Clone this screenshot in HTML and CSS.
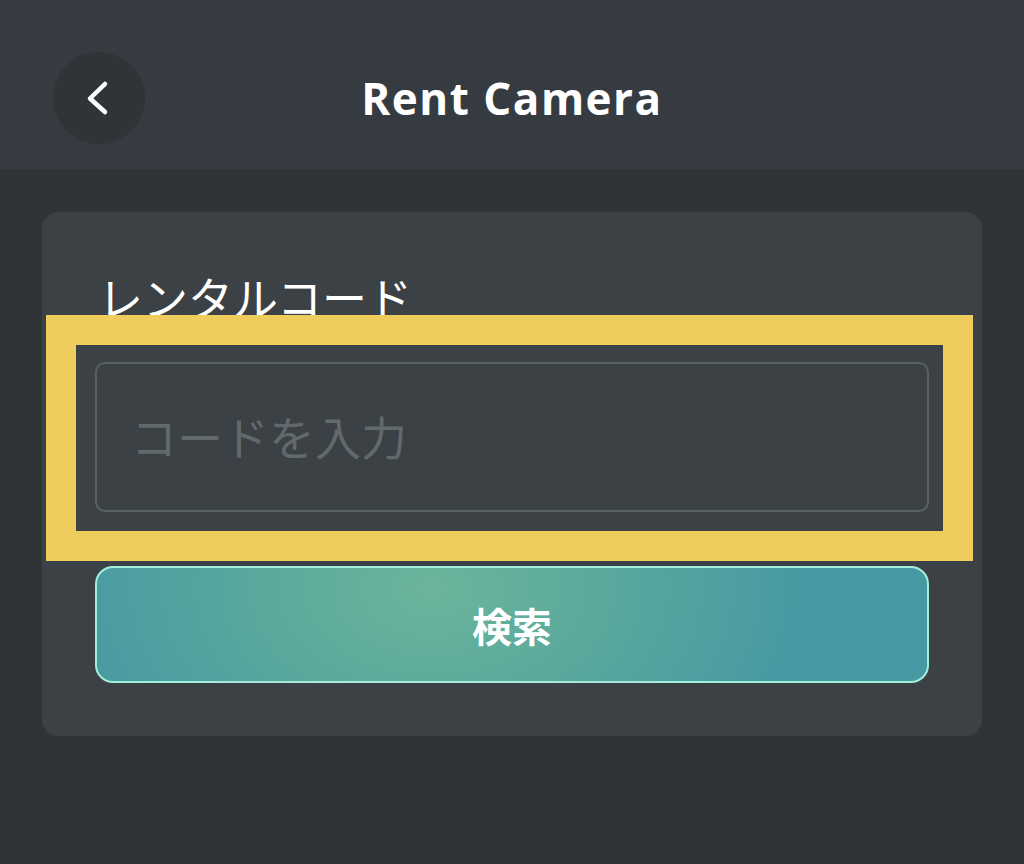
FILE: index.html
```html
<!DOCTYPE html>
<html lang="ja">

<head>
    <meta charset="UTF-8">
    <meta name="viewport" content="width=device-width, initial-scale=1.0">
    <title>Rent Camera</title>
    <link rel="stylesheet" href="styles.css">
</head>

<body>
    <div class="header">
        <div class="backWrap">
            <a class="back" href="#">
                <svg width="30" height="40" viewBox="0 0 30 40">
                    <path d="M21 6 L6 20.5 L21 34" fill="none" stroke="#fff" stroke-width="4.5" stroke-linecap="round" stroke-linejoin="round"/>
                </svg>
            </a>
        </div>
        <h1 class="title">Rent Camera</h1>
        <div></div>
    </div>
    <div class="main">
        <div class="card">
            <div class="label">レンタルコード</div>
            <input class="codeInput" type="text" placeholder="コードを入力">
            <button class="searchBtn">検索</button>
            <div class="mark"></div>
        </div>
    </div>
</body>

</html>
```

FILE: styles.css
```css
* {
    box-sizing: border-box;
}

body {
    margin: 0;
    height: 864px;
    background: #2f3436;
    font-family: "Noto Sans CJK JP", "Noto Sans", sans-serif;
    color: #fff;
}

.header {
    display: grid;
    grid-template-columns: 1fr auto 1fr;
    align-items: center;
    height: 170px;
    padding: 26px 53px 0;
    background: #363b41;
    border-bottom: 1px solid #30363a;
}

.back {
    display: flex;
    align-items: center;
    justify-content: center;
    width: 92px;
    height: 92px;
    border-radius: 50%;
    background: #2f3436;
}

.title {
    margin: 0;
    font: bold 44px/1 "Open Sans", "Noto Sans", sans-serif;
    letter-spacing: 1.5px;
}

.main {
    padding: 42px 42px;
}

.card {
    position: relative;
    display: flex;
    flex-direction: column;
    height: 524px;
    padding: 56px 53px 53px;
    background: #3b4144;
    border-radius: 16px;
}

.label {
    padding-left: 3px;
    font-size: 45px;
    line-height: 58px;
    color: #fff;
}

.codeInput {
    margin-top: 36px;
    height: 150px;
    padding: 0 34px 4px;
    background: transparent;
    border: 2px solid #5a6164;
    border-radius: 10px;
    font: 46px "Noto Sans CJK JP", sans-serif;
    color: #fff;
    outline: none;
}

.codeInput::placeholder {
    color: #62696c;
}

.searchBtn {
    margin-top: 54px;
    height: 117px;
    border: 2px solid #a2eedb;
    border-radius: 18px;
    background: radial-gradient(ellipse 380px 260px at 335px 20px, #6cb59c 0%, #59a99c 45%, #4699a3 100%);
    font: bold 40px "Noto Sans CJK JP", sans-serif;
    color: #fff;
}

/* annotation box */
.mark {
    position: absolute;
    left: 4px;
    top: 103px;
    width: 927px;
    height: 246px;
    border: 30px solid #eecd5c;
}
```
